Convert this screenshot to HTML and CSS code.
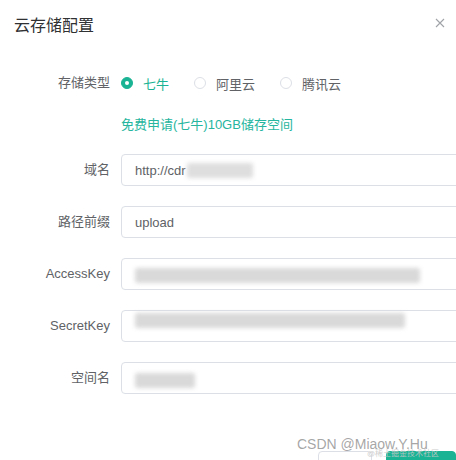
FILE: index.html
```html
<!DOCTYPE html>
<html lang="zh">
<head>
<meta charset="utf-8">
<title>云存储配置</title>
<link rel="stylesheet" href="styles.css">
</head>
<body>
<div class="dialog">
  <div class="header">
    <span class="title">云存储配置</span>
    <svg class="close" width="10" height="10" viewBox="0 0 10 10"><path d="M1 1L9 9M9 1L1 9" stroke="#a0a3a8" stroke-width="1.1" fill="none"/></svg>
  </div>
  <div class="form">
    <div class="row radio-row">
      <label class="label">存储类型</label>
      <div class="radios">
        <span class="radio checked"><span class="dot"></span><span class="rtext">七牛</span></span>
        <span class="radio"><span class="dot"></span><span class="rtext">阿里云</span></span>
        <span class="radio"><span class="dot"></span><span class="rtext">腾讯云</span></span>
      </div>
    </div>
    <div class="row link-row">
      <span class="label"></span>
      <span class="link">免费申请(七牛)10GB储存空间</span>
    </div>
    <div class="row field">
      <label class="label">域名</label>
      <div class="input"><span>http://cdr</span><span class="blur b1"></span></div>
    </div>
    <div class="row field">
      <label class="label">路径前缀</label>
      <div class="input"><span>upload</span></div>
    </div>
    <div class="row field">
      <label class="label">AccessKey</label>
      <div class="input"><span class="blur b3"></span></div>
    </div>
    <div class="row field">
      <label class="label">SecretKey</label>
      <div class="input"><span class="blur b4"></span></div>
    </div>
    <div class="row field">
      <label class="label">空间名</label>
      <div class="input"><span class="blur b5"></span></div>
    </div>
  </div>
  <div class="footer">
    <span class="btn cancel">取消</span>
    <span class="btn ok">确定</span>
  </div>
  <div class="wm">CSDN @Miaow.Y.Hu</div>
  <div class="wm2">@稀土掘金技术社区</div>
</div>
</body>
</html>
```
FILE: styles.css
```css
html, body {
  margin: 0;
  padding: 0;
  background: #fff;
  overflow: hidden;
}
body {
  width: 456px;
  height: 460px;
  font-family: "Liberation Sans", "Noto Sans CJK SC", sans-serif;
  font-size: 13px;
  color: #606266;
}
.dialog {
  position: relative;
  width: 456px;
  height: 460px;
  overflow: hidden;
}
.header {
  position: relative;
  height: 52px;
  box-sizing: border-box;
  padding: 17px 14px 0 14px;
}
.title {
  font-size: 16px;
  line-height: 18px;
  color: #303133;
}
.close {
  position: absolute;
  left: 435px;
  top: 18px;
}
.form {
  padding-top: 15px;
  display: flex;
  flex-direction: column;
}
.row {
  display: flex;
  align-items: center;
}
.label {
  width: 110px;
  flex: none;
  text-align: right;
  padding-right: 11px;
  box-sizing: content-box;
  line-height: 32px;
  color: #606266;
  white-space: nowrap;
}
.radio-row {
  height: 32px;
}
.radios {
  display: flex;
  align-items: center;
}
.radio {
  display: flex;
  align-items: center;
  margin-right: 25px;
  color: #606266;
}
.dot {
  width: 10px;
  height: 10px;
  border: 1px solid #dcdfe6;
  border-radius: 50%;
  box-sizing: content-box;
  position: relative;
  margin-right: 10px;
  background: #fff;
}
.radio.checked .dot {
  border-color: #1ab394;
  background: #1ab394;
}
.radio.checked .dot::after {
  content: "";
  position: absolute;
  left: 3px;
  top: 3px;
  width: 4px;
  height: 4px;
  border-radius: 50%;
  background: #fff;
}
.radio.checked .rtext {
  color: #1ab394;
}
.link-row {
  margin-top: 16px;
  height: 20px;
}
.link-row .label {
  line-height: 20px;
}
.link {
  color: #26b59e;
  line-height: 20px;
}
.link-row + .field {
  margin-top: 19px;
}
.field + .field {
  margin-top: 20px;
}
.input {
  flex: none;
  width: 360px;
  height: 32px;
  box-sizing: border-box;
  border: 1px solid #dcdfe6;
  border-radius: 4px;
  padding: 0 13px;
  display: flex;
  align-items: center;
  color: #606266;
}
.blur {
  display: inline-block;
  height: 15px;
  background: #d9d9d9;
  filter: blur(2px);
  border-radius: 2px;
}
.b1 { width: 66px; margin-left: 1px; background: #dedede; }
.b3 { width: 285px; margin-top: 3px; }
.b4 { width: 270px; margin-top: -12px; }
.b5 { width: 60px; margin-top: 4px; }
.footer {
  margin-top: 57px;
  display: flex;
  padding-left: 318px;
}
.btn {
  display: inline-block;
  height: 32px;
  box-sizing: border-box;
  border-radius: 4px;
  line-height: 30px;
  text-align: center;
  font-size: 13px;
}
.cancel {
  width: 62px;
  border: 1px solid #dcdfe6;
  color: #606266;
  background: #fff;
}
.ok {
  width: 80px;
  margin-left: 14px;
  background: #1ab394;
  border: 1px solid #1ab394;
  color: #fff;
}
.wm {
  position: absolute;
  left: 297px;
  top: 436px;
  font-size: 14px;
  line-height: 16px;
  color: rgba(150, 150, 150, 0.85);
  white-space: nowrap;
}
.wm2 {
  position: absolute;
  left: 367px;
  top: 449px;
  font-size: 8px;
  line-height: 9px;
  color: rgba(200, 200, 200, 0.9);
  white-space: nowrap;
}
```
